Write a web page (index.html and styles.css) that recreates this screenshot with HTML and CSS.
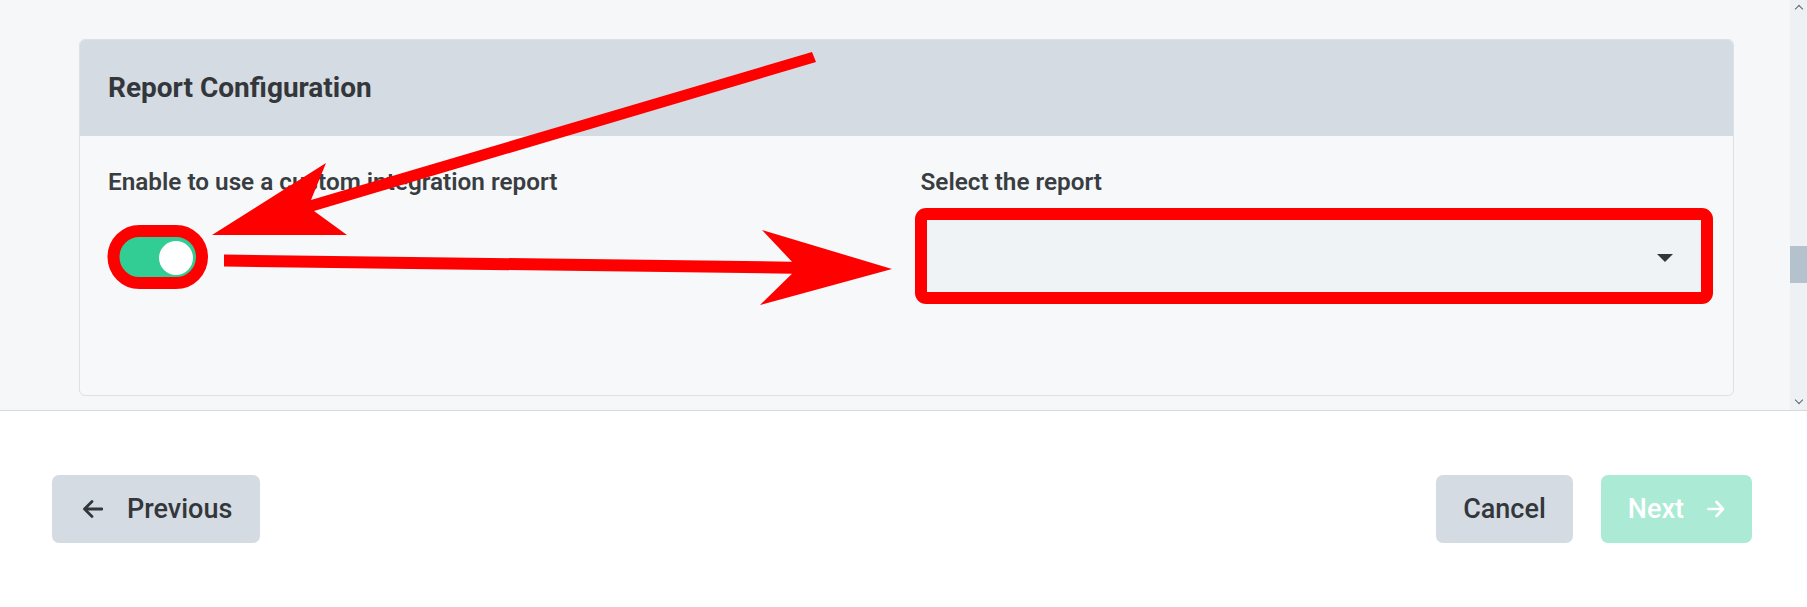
FILE: index.html
```html
<!DOCTYPE html>
<html lang="en">
<head>
<meta charset="utf-8">
<title>Report Configuration</title>
<link rel="stylesheet" href="styles.css">
</head>
<body>
<div class="page">
  <div class="scroll-area">
    <div class="scroll-content">
      <section class="card">
        <header class="card-header">
          <h2 class="card-title">Report Configuration</h2>
        </header>
        <div class="card-body">
          <div class="field">
            <label class="field-label">Enable to use a custom integration report</label>
            <div class="field-control">
              <span class="toggle"><span class="toggle-knob"></span></span>
            </div>
          </div>
          <div class="field">
            <label class="field-label">Select the report</label>
            <div class="field-control">
              <div class="select"><span class="select-caret"></span></div>
            </div>
          </div>
        </div>
      </section>
    </div>
    <div class="scrollbar">
      <span class="sb-arrow sb-up"></span>
      <span class="sb-thumb"></span>
      <span class="sb-arrow sb-down"></span>
    </div>
  </div>
  <footer class="footer">
    <button class="btn btn-muted btn-prev">
      <svg class="btn-icon" width="21" height="18" viewBox="0 0 21 18"><path d="M20 9H2.5M10 1.5L2.5 9L10 16.5" fill="none" stroke="#33373b" stroke-width="2.8" stroke-linecap="round" stroke-linejoin="round"/></svg>
      <span>Previous</span>
    </button>
    <div class="footer-right">
      <button class="btn btn-muted">Cancel</button>
      <button class="btn btn-next">
        <span>Next</span>
        <svg class="btn-icon" width="18" height="18" viewBox="0 0 18 18"><path d="M1.5 9H16M9.5 2L16 9L9.5 16" fill="none" stroke="#ffffff" stroke-width="2.6" stroke-linecap="round" stroke-linejoin="round"/></svg>
      </button>
    </div>
  </footer>
  <svg class="annotations" width="1807" height="607" viewBox="0 0 1807 607">
    <polygon fill="#ff0000" points="812,52 311,200 326,163 212,235 347,235 314,211 816,62"/>
    <polygon fill="#ff0000" points="224,254.5 792,261.7 762,230 892,269 760,305 792,273.7 224,266.5"/>
    <rect x="113.5" y="231" width="88.5" height="52" rx="26" ry="26" fill="none" stroke="#ff0000" stroke-width="12"/>
    <rect x="921" y="214" width="786" height="84" rx="5" ry="5" fill="none" stroke="#ff0000" stroke-width="12"/>
  </svg>
</div>
</body>
</html>
```

FILE: styles.css
```css
* { box-sizing: border-box; }
html, body { margin: 0; padding: 0; }
body {
  width: 1807px;
  height: 607px;
  overflow: hidden;
  background: #ffffff;
  font-family: Roboto, "Liberation Sans", Arial, sans-serif;
  color: #363a3e;
}
.page {
  position: relative;
  display: flex;
  flex-direction: column;
  height: 607px;
}
.scroll-area {
  display: flex;
  height: 411px;
  background: #f6f7f9;
  border-bottom: 1px solid #d3dbe2;
}
.scroll-content {
  flex: 1;
  padding: 39px 56px 0 79px;
}
.card {
  border: 1px solid #dce1e6;
  border-radius: 6px;
  overflow: hidden;
  background: #f6f8fa;
}
.card-header {
  height: 96px;
  background: #d4dbe2;
  display: flex;
  align-items: center;
  padding: 0 28px;
}
.card-title {
  margin: 0;
  font-size: 28px;
  font-weight: 700;
  line-height: 36px;
  color: #33373b;
}
.card-body {
  display: grid;
  grid-template-columns: 1fr 1fr;
  column-gap: 28px;
  padding: 28px 28px 95px;
}
.field { display: flex; flex-direction: column; gap: 16px; }
.field-label {
  font-size: 24.3px;
  font-weight: 600;
  line-height: 36px;
  color: #393d41;
}
.field-control {
  height: 84px;
  display: flex;
  align-items: center;
}
.toggle {
  width: 90px;
  height: 44px;
  border-radius: 22px;
  background: #31cd94;
  display: flex;
  align-items: center;
  justify-content: flex-end;
  padding: 0 5px;
}
.toggle-knob {
  width: 34px;
  height: 34px;
  border-radius: 50%;
  background: #ffffff;
}
.select {
  width: 100%;
  height: 84px;
  background: #eff3f6;
  border: 1px solid #d6dde4;
  border-radius: 6px;
  display: flex;
  align-items: center;
  justify-content: flex-end;
  padding-right: 31px;
}
.select-caret {
  width: 0;
  height: 0;
  border-left: 8px solid transparent;
  border-right: 8px solid transparent;
  border-top: 8px solid #333639;
}
.scrollbar {
  width: 17px;
  background: #eef1f4;
  display: flex;
  flex-direction: column;
  align-items: center;
  position: relative;
}
.sb-arrow {
  width: 6px;
  height: 6px;
  border-left: 1.5px solid #5f6368;
  border-top: 1.5px solid #5f6368;
}
.sb-up { transform: rotate(45deg); margin-top: 6px; }
.sb-down { transform: rotate(225deg); margin-top: auto; margin-bottom: 7px; }
.sb-thumb {
  width: 17px;
  height: 37px;
  background: #b4c2ce;
  margin-top: 234px;
}
.footer {
  flex: 1;
  display: flex;
  align-items: center;
  justify-content: space-between;
  padding: 0 55px 0 52px;
}
.footer-right { display: flex; gap: 28px; }
.btn {
  height: 68px;
  border: none;
  border-radius: 7px;
  font-family: Roboto, "Liberation Sans", Arial, sans-serif;
  font-size: 27px;
  font-weight: 500;
  display: flex;
  align-items: center;
  padding: 0 27px;
  cursor: pointer;
}
.btn-muted { background: #d4dbe2; color: #33373b; }
.btn-prev { padding: 0 28px 0 30px; gap: 24px; }
.btn-next { background: #abead5; color: #ffffff; gap: 23px; padding: 0 27px 0 27px; }
.btn-icon { display: block; }
.annotations {
  position: absolute;
  left: 0;
  top: 0;
  pointer-events: none;
}
```
